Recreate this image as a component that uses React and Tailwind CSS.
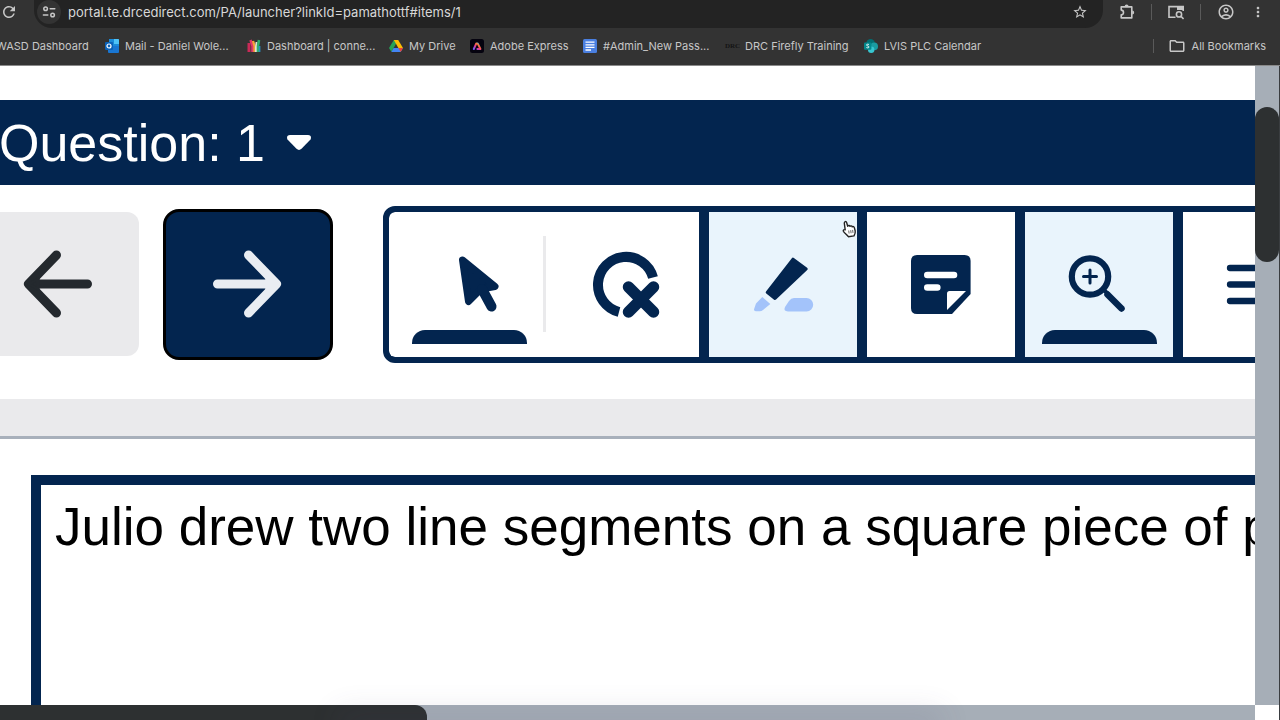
import React from "react";
import { MdRefresh, MdStarBorder, MdOutlineAccountCircle, MdMoreVert, MdOutlineFolder } from "react-icons/md";

function TuneIcon() {
  return (
    <svg viewBox="0 0 16 16" className="size-4" fill="none" stroke="currentColor" strokeWidth="1.5" strokeLinecap="round">
      <circle cx="4.6" cy="4.8" r="1.8" />
      <path d="M9.2 4.8h4.6M2.4 11h4.4" />
      <circle cx="11.6" cy="11" r="1.8" />
    </svg>
  );
}

function PuzzleIcon() {
  return (
    <svg viewBox="0 0 16 16" className="size-4">
      <path d="M2.2 2.9h10.600v11H2.200v-3.200a2.300 2.300 0 0 0 0-4.600z" fill="none" stroke="currentColor" strokeWidth="1.6" strokeLinejoin="round" />
      <path d="M5.6 2.500a2 2 0 0 1 4 0zM13.200 6.400a2 2 0 0 1 0 4z" fill="currentColor" />
    </svg>
  );
}

function TabSearchIcon() {
  return (
    <svg viewBox="0 0 16 16" className="size-4" fill="none" stroke="currentColor" strokeWidth="1.6">
      <path d="M7.5 13.2H1V2.6h8M15.2 7V2.6H9" />
      <path d="M9 2h6.4v4H9z" fill="currentColor" stroke="none" />
      <circle cx="11" cy="10.4" r="2.6" />
      <path d="m13 12.4 2.6 2.6" />
    </svg>
  );
}

function OutlookIcon() {
  return (
    <svg viewBox="0 0 14 14" className="size-3.5">
      <path d="M4 0h9a1 1 0 0 1 1 1v6H4z" fill="#1a8ad8" />
      <path d="M9 0h4a1 1 0 0 1 1 1v4H9z" fill="#4fc3f7" />
      <path d="M3 7h11v6a1 1 0 0 1-1 1H4a1 1 0 0 1-1-1z" fill="#1976d2" />
      <rect y="3" width="8" height="8" rx="1" fill="#0b62b8" />
      <circle cx="4" cy="7" r="2" fill="none" stroke="#fff" strokeWidth="1.2" />
    </svg>
  );
}

function ConnectIcon() {
  return (
    <svg viewBox="0 0 14 14" className="size-3.5" fill="none">
      <path d="M2 4v9" stroke="#c92a57" strokeWidth="3" />
      <path d="m3.500 1 2 6v6" stroke="#e0356b" strokeWidth="2.500" />
      <path d="m6 2 1.500 5v6" stroke="#f2a33a" strokeWidth="2.400" />
      <path d="M9.600 3 9 8v5" stroke="#e7ded0" strokeWidth="2" />
      <path d="m12 1-1 6v6" stroke="#2fae6b" strokeWidth="2.600" />
      <path d="M12.600 7v6" stroke="#2b8fc4" strokeWidth="1.600" />
    </svg>
  );
}

function DriveIcon() {
  return (
    <svg viewBox="0 0 14 14" className="size-3.5">
      <path d="M4.8 1h4.4L4.6 9 2.4 12.8 0 9z" fill="#24a257" />
      <path d="M4.8 1h4.4L14 9H9.4z" fill="#fbbc05" />
      <path d="M4.6 9H14l-2.3 4H2.3z" fill="#4285f4" />
      <path d="M9.4 9H14l-2.3 4z" fill="#ea4335" />
    </svg>
  );
}

function AdobeExpressIcon() {
  return (
    <svg viewBox="0 0 14 14" className="size-3.5">
      <defs>
        <linearGradient id="express" x1="0" x2="1" y1="1" y2="0">
          <stop offset="0" stopColor="#6c5cff" />
          <stop offset="0.4" stopColor="#e8358f" />
          <stop offset="0.7" stopColor="#ff7a2f" />
          <stop offset="1" stopColor="#46b4ff" />
        </linearGradient>
      </defs>
      <rect width="14" height="14" rx="2.5" fill="#05030f" />
      <path d="M3.8 10 6.200 4.600h1.600L10.400 10H7.400" fill="none" stroke="url(#express)" strokeWidth="2" strokeLinejoin="round" strokeLinecap="round" />
    </svg>
  );
}

function DocsIcon() {
  return (
    <svg viewBox="0 0 14 14" className="size-3.5">
      <rect width="14" height="14" rx="1.5" fill="#4a7fe0" />
      <path d="M2.5 3.2h9M2.5 5.8h9M2.5 8.4h9M2.5 11h5.5" stroke="#fff" strokeWidth="1.3" />
    </svg>
  );
}

function DrcIcon() {
  return <span className="w-3.5 text-center font-['Liberation_Serif',serif] text-[7px] leading-3.5 font-bold text-[#141414]">DRC</span>;
}

function SharePointIcon() {
  return (
    <svg viewBox="0 0 14 14" className="size-3.5">
      <circle cx="6.6" cy="4.2" r="4.2" fill="#036c70" />
      <circle cx="10.2" cy="7.4" r="3.8" fill="#1a9ba1" />
      <circle cx="7.2" cy="10.8" r="3.2" fill="#37c6d0" />
      <rect y="3.4" width="7.4" height="7.4" rx="1" fill="#03888c" />
      <path d="M5 5.6c-1.1-.7-2.6-.4-2.5.5.1 1 2.5.7 2.5 1.9 0 1-1.6 1.1-2.6.5" fill="none" stroke="#fff" strokeWidth="0.9" />
    </svg>
  );
}

const bookmarks = [
  { label: "Mail - Daniel Wole...", Icon: OutlookIcon, width: "w-[142px]" },
  { label: "Dashboard | conne...", Icon: ConnectIcon, width: "w-[142px]" },
  { label: "My Drive", Icon: DriveIcon, width: "w-[81px]" },
  { label: "Adobe Express", Icon: AdobeExpressIcon, width: "w-[113px]" },
  { label: "#Admin_New Pass...", Icon: DocsIcon, width: "w-[142px]" },
  { label: "DRC Firefly Training", Icon: DrcIcon, width: "w-[139px]" },
  { label: "LVIS PLC Calendar", Icon: SharePointIcon, width: "w-[142px]" },
];

function BrowserBar() {
  return (
    <header className="shrink-0 border-b border-[#8a8a8a] bg-[#333333] font-[Inter,sans-serif] text-[#c7c7c7]">
      <div className="flex h-7 items-center">
        <button aria-label="Reload" className="flex w-[34px] shrink-0 pb-1">
          <MdRefresh className="size-[18px]" />
        </button>
        <div className="flex h-full min-w-0 flex-1 items-center rounded-b-[18px] bg-[#232323] px-[3px] pb-1">
          <button aria-label="View site information" className="flex size-6 shrink-0 items-center justify-center rounded-full bg-[#333333]">
            <TuneIcon />
          </button>
          <input
            aria-label="Address"
            className="min-w-0 flex-1 bg-transparent pl-[7px] text-[13px] leading-6 text-[#d8d8d8] outline-none"
            defaultValue="portal.te.drcedirect.com/PA/launcher?linkId=pamathottf#items/1"
          />
          <button aria-label="Bookmark this tab" className="mr-3 shrink-0">
            <MdStarBorder className="size-4" />
          </button>
        </div>
        <div className="flex shrink-0 items-center gap-4 pr-[14px] pb-1 pl-4">
          <button aria-label="Extensions"><PuzzleIcon /></button>
          <span className="h-4 w-px bg-[#5a5a5a]" />
          <button aria-label="Search tabs"><TabSearchIcon /></button>
          <span className="h-4 w-px bg-[#5a5a5a]" />
          <button aria-label="Profile"><MdOutlineAccountCircle className="size-[18px]" /></button>
          <button aria-label="Menu" className="-ml-px"><MdMoreVert className="size-4" /></button>
        </div>
      </div>
      <nav className="flex h-[37px] items-center pr-[14px] pb-0.5 text-[11px] leading-4 whitespace-nowrap">
        <a href="#wasd" className="-ml-1 w-[109px]">WASD Dashboard</a>
        {bookmarks.map(({ label, Icon, width }) => (
          <a key={label} href="#bookmark" className={`flex items-center gap-1.5 ${width}`}>
            <Icon />
            {label}
          </a>
        ))}
        <span className="mr-3.5 ml-auto h-3.5 w-px bg-[#5a5a5a]" />
        <button className="flex items-center gap-1.5">
          <MdOutlineFolder className="size-[18px]" />
          All Bookmarks
        </button>
      </nav>
    </header>
  );
}

function ArrowIcon({ className }) {
  return (
    <svg viewBox="0 0 80 80" className={className} fill="none" stroke="currentColor" strokeWidth="9" strokeLinecap="round" strokeLinejoin="round">
      <path d="M10.5 40h59M41.5 11 69.5 40 41.5 69" />
      <path d="m60 35 9 5-9 5z" strokeWidth="3" fill="currentColor" />
    </svg>
  );
}

function PointerIcon() {
  return (
    <svg viewBox="0 0 80 80" className="size-20">
      <path d="M33 15.5 66 42.5 51 45 39 57.5z" fill="#03254f" />
      <path d="M32.5 16 65 42.500 51 45 38.500 57.500z" fill="#03254f" stroke="#03254f" strokeWidth="7" strokeLinejoin="round" />
      <path d="m52 45 9.500 17.500" stroke="#03254f" strokeWidth="10" strokeLinecap="round" />
    </svg>
  );
}

function EliminateIcon() {
  return (
    <svg viewBox="0 0 80 80" className="size-20" fill="none" stroke="#03254f">
      <path d="M71 33.500A28 28 0 1 0 37 68" strokeWidth="10" />
      <path d="m46.500 43 25 25M71.500 43l-25 25" strokeWidth="11.500" strokeLinecap="round" />
    </svg>
  );
}

function HighlighterIcon() {
  return (
    <svg viewBox="0 0 80 80" className="size-20" strokeLinejoin="round">
      <path d="m50 15.2 13.2 9.8L32 54.5 24.2 48.3z" fill="#03254f" stroke="#03254f" strokeWidth="3" />
      <path d="m19.3 53 8 7-7.3 6q-1.4 1.2-3.4 1.2H12.8q-2.4 0-1.6-2.4L13 59.6z" fill="#a3c3fa" />
      <path d="M51 54h12.5a6.7 6.7 0 0 1 0 13.4H45q-5 0-3-4.4l4-6q2-3 5-3z" fill="#a3c3fa" />
    </svg>
  );
}

function NoteIcon() {
  return (
    <svg viewBox="0 0 80 80" className="size-20">
      <path d="M16 11h47.600q6 0 6 6v33L51 70H16q-6 0-6-6V17q0-6 6-6z" fill="#03254f" />
      <path d="M26.300 31H53M26.300 43.500h10" stroke="#fff" strokeWidth="6.600" strokeLinecap="round" />
      <path d="M48.500 47H65L46 66V49.500q0-2.500 2.500-2.500z" fill="#fff" />
    </svg>
  );
}

function MagnifierIcon() {
  return (
    <svg viewBox="0 0 80 80" className="size-20" fill="none" stroke="#03254f" strokeLinecap="round">
      <circle cx="31" cy="32.500" r="18.200" strokeWidth="6.200" />
      <path d="M31 26v13M24.500 32.500h13" strokeWidth="3" />
      <path d="m44 45 5 5" strokeWidth="4" />
      <path d="m48.500 50.500 14 14" strokeWidth="6.500" />
    </svg>
  );
}

function LinesIcon() {
  return (
    <svg viewBox="0 0 80 80" className="size-20" stroke="#03254f" strokeWidth="6.300" strokeLinecap="round">
      <path d="M13 24h54M13 40.500h54M13 57h54" />
    </svg>
  );
}

function HandCursor() {
  return (
    <svg viewBox="0 0 16 18" className="absolute top-2 right-0 h-[18px] w-4">
      <path
        d="M4.200 9.800 3.300 3.200C3.200 1.200 5.200 1 5.700 2.800l1 3.400c.6-1 2-.9 2.300.1.700-.8 2-.5 2.200.5.800-.5 2-.1 2.200 1l.8 3.200c.4 1.800-.4 3.400-1.200 4.900l-5.600.9c-.8-1.700-3.600-3.300-5-5.500-.6-1.200.9-2 1.800-1.500z"
        fill="#fff"
        stroke="#222"
        strokeWidth="1.400"
        strokeLinejoin="round"
      />
      <path d="m7.700 10.500.4 3M9.700 10.200l.4 3M11.600 9.900l.4 3" stroke="#555" strokeWidth="0.900" />
    </svg>
  );
}

function Tool({ label, active, className, children }) {
  return (
    <button aria-label={label} aria-pressed={active} className={`relative flex h-[145px] shrink-0 flex-col items-center gap-1.5 pt-8 ${className}`}>
      {children}
      {active && <span className="h-3.5 w-[115px] rounded-t-[13px] bg-[#03254f]" />}
    </button>
  );
}

function Toolbar() {
  return (
    <div className="flex h-[214px] items-center bg-white pb-4">
      <button aria-label="Previous question" className="-ml-6 flex h-36 w-[163px] shrink-0 items-center justify-center rounded-xl bg-[#eaeaec] text-[#24292e]">
        <ArrowIcon className="size-20 rotate-180" />
      </button>
      <button aria-label="Next question" className="ml-6 flex h-[151px] w-[170px] shrink-0 items-center justify-center rounded-2xl border-[3px] border-black bg-[#03254f] pr-0.5 text-[#e9edf2]">
        <ArrowIcon className="size-20" />
      </button>
      <div className="ml-[50px] flex shrink-0 gap-2.5 overflow-hidden rounded-xl border-6 border-[#03254f] bg-[#03254f]">
        <div className="flex items-center rounded-l-md bg-white">
          <Tool label="Pointer" active className="w-[155px] pl-1.5">
            <PointerIcon />
          </Tool>
          <span className="-mx-px h-24 w-[3px] bg-[#eaeaec]" />
          <Tool label="Cross-off" className="w-[154px]">
            <EliminateIcon />
          </Tool>
        </div>
        <Tool label="Highlighter" className="w-[148px] bg-[#e9f4fc]">
          <HighlighterIcon />
          <HandCursor />
        </Tool>
        <Tool label="Sticky note" className="w-[148px] bg-white">
          <NoteIcon />
        </Tool>
        <Tool label="Magnifier" active className="w-[148px] bg-[#e9f4fc]">
          <MagnifierIcon />
        </Tool>
        <Tool label="Line guide" className="w-[148px] bg-white">
          <LinesIcon />
        </Tool>
      </div>
    </div>
  );
}

function QuestionPanel() {
  return (
    <section className="flex min-h-0 flex-1 bg-white pt-9 pl-[31px]">
      <div className="min-w-0 flex-1 overflow-hidden border-t-[10px] border-l-[10px] border-[#03254f] pt-3 pl-3.5">
        <p className="text-[53px] leading-[60px] whitespace-nowrap text-black">Julio drew two line segments on a square piece of paper.</p>
      </div>
    </section>
  );
}

export default function App() {
  return (
    <div className="relative flex h-screen flex-col overflow-hidden bg-white">
      <BrowserBar />
      <div className="flex min-h-0 flex-1 border-r border-[#3a3d40]">
        <div className="flex min-w-0 flex-1 flex-col">
          <main className="flex min-h-0 flex-1 flex-col overflow-hidden pt-[34px] font-['Liberation_Sans',Arial,sans-serif]">
            <div className="flex h-[85px] shrink-0 items-center bg-[#03254f] text-white">
              <button className="-ml-px flex items-center gap-[22px] text-[52px] leading-[60px]">
                Question: 1
                <svg viewBox="0 0 24 15" className="h-[15px] w-6" fill="currentColor">
                  <path d="M3 0h18q4.200.5 2.500 4.500L14.500 13.800q-2.500 2.200-5 0L.5 4.500Q-1.200.5 3 0z" />
                </svg>
              </button>
            </div>
            <Toolbar />
            <div className="h-10 shrink-0 border-b-[3px] border-[#a8b0bb] bg-[#eaeaec]" />
            <QuestionPanel />
          </main>
          <div className="h-[15px] shrink-0 bg-[#a6aeb7]">
            <div className="h-full w-[34%] rounded-tr-xl bg-[#2d3031]" />
          </div>
        </div>
        <div className="flex w-6 shrink-0 flex-col">
          <div className="flex-1 bg-[#a6aeb7] pt-[41px]">
            <div className="h-[155px] rounded-full bg-[#2d3031]" />
          </div>
          <div className="h-[15px] bg-white" />
        </div>
      </div>
      {/* soft shadow of the dock below the window */}
      <div className="pointer-events-none absolute inset-x-[27%] -bottom-2 h-2 shadow-[0_0_30px_8px_rgba(80,70,110,0.14)]" />
    </div>
  );
}
